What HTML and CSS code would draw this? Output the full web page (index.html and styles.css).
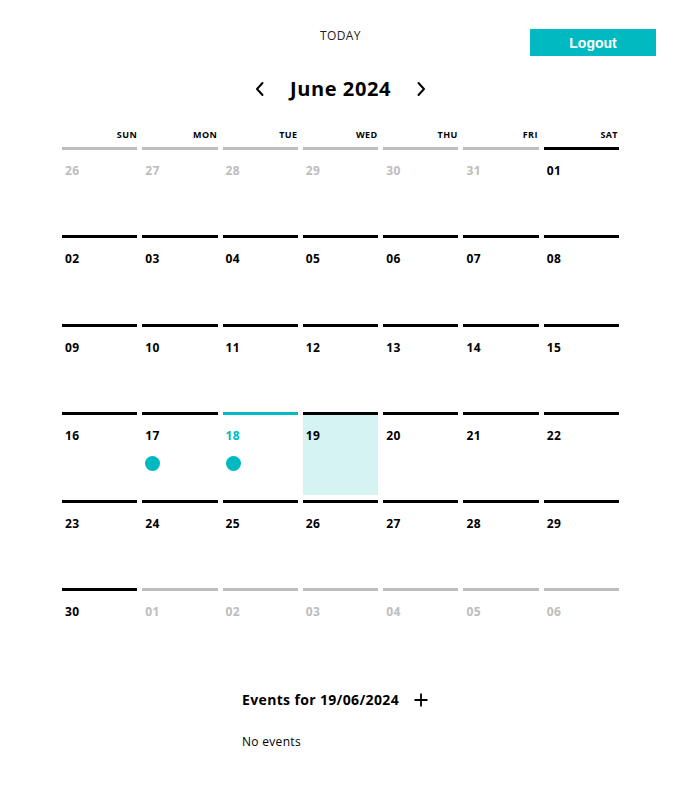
FILE: index.html
```html
<!DOCTYPE html>
<html lang="en">
<head>
<meta charset="utf-8">
<title>Calendar</title>
<link rel="stylesheet" href="styles.css">
</head>
<body>
<header class="topbar">
  <span class="spacer"></span>
  <button class="today">TODAY</button>
  <button class="logout">Logout</button>
</header>

<div class="month-nav">
  <button class="chev" aria-label="Previous month">
    <svg width="12" height="16" viewBox="0 0 12 16"><path d="M8.5 2 L3 8 L8.5 14" fill="none" stroke="#000" stroke-width="2" stroke-linecap="round" stroke-linejoin="round"/></svg>
  </button>
  <h1 class="month-title">June 2024</h1>
  <button class="chev" aria-label="Next month">
    <svg width="12" height="16" viewBox="0 0 12 16"><path d="M3.5 2 L9 8 L3.5 14" fill="none" stroke="#000" stroke-width="2" stroke-linecap="round" stroke-linejoin="round"/></svg>
  </button>
</div>

<section class="calendar">
  <div class="weekdays">
    <div>SUN</div><div>MON</div><div>TUE</div><div>WED</div><div>THU</div><div>FRI</div><div>SAT</div>
  </div>
  <div class="days">
    <div class="cell other"><span class="num">26</span></div>
    <div class="cell other"><span class="num">27</span></div>
    <div class="cell other"><span class="num">28</span></div>
    <div class="cell other"><span class="num">29</span></div>
    <div class="cell other"><span class="num">30</span></div>
    <div class="cell other"><span class="num">31</span></div>
    <div class="cell"><span class="num">01</span></div>

    <div class="cell"><span class="num">02</span></div>
    <div class="cell"><span class="num">03</span></div>
    <div class="cell"><span class="num">04</span></div>
    <div class="cell"><span class="num">05</span></div>
    <div class="cell"><span class="num">06</span></div>
    <div class="cell"><span class="num">07</span></div>
    <div class="cell"><span class="num">08</span></div>

    <div class="cell"><span class="num">09</span></div>
    <div class="cell"><span class="num">10</span></div>
    <div class="cell"><span class="num">11</span></div>
    <div class="cell"><span class="num">12</span></div>
    <div class="cell"><span class="num">13</span></div>
    <div class="cell"><span class="num">14</span></div>
    <div class="cell"><span class="num">15</span></div>

    <div class="cell"><span class="num">16</span></div>
    <div class="cell"><span class="num">17</span><span class="dot"></span></div>
    <div class="cell today-cell"><span class="num">18</span><span class="dot"></span></div>
    <div class="cell selected"><span class="num">19</span></div>
    <div class="cell"><span class="num">20</span></div>
    <div class="cell"><span class="num">21</span></div>
    <div class="cell"><span class="num">22</span></div>

    <div class="cell"><span class="num">23</span></div>
    <div class="cell"><span class="num">24</span></div>
    <div class="cell"><span class="num">25</span></div>
    <div class="cell"><span class="num">26</span></div>
    <div class="cell"><span class="num">27</span></div>
    <div class="cell"><span class="num">28</span></div>
    <div class="cell"><span class="num">29</span></div>

    <div class="cell"><span class="num">30</span></div>
    <div class="cell other"><span class="num">01</span></div>
    <div class="cell other"><span class="num">02</span></div>
    <div class="cell other"><span class="num">03</span></div>
    <div class="cell other"><span class="num">04</span></div>
    <div class="cell other"><span class="num">05</span></div>
    <div class="cell other"><span class="num">06</span></div>
  </div>
</section>

<section class="events">
  <div class="events-head">
    <h2 class="events-title">Events for 19/06/2024</h2>
    <button class="add" aria-label="Add event">
      <svg width="14" height="14" viewBox="0 0 14 14"><path d="M7 0.5 V13.5 M0.5 7 H13.5" stroke="#000" stroke-width="1.8"/></svg>
    </button>
  </div>
  <p class="no-events">No events</p>
</section>
</body>
</html>
```

FILE: styles.css
```css
* { box-sizing: border-box; }

body {
  margin: 0;
  background: #fff;
  color: #000;
  font-family: "Open Sans", "DejaVu Sans", sans-serif;
}

button {
  font-family: inherit;
  background: none;
  border: 0;
  padding: 0;
  cursor: pointer;
}

.topbar {
  display: grid;
  grid-template-columns: 1fr auto 1fr;
  align-items: start;
  padding: 29px 25px 0;
}

.today {
  font-size: 12px;
  line-height: 14px;
  color: #222;
  letter-spacing: 0.4px;
}

.logout {
  justify-self: end;
  width: 126px;
  height: 27px;
  background: #00b9c1;
  color: #fff;
  font-family: "Liberation Sans", Arial, sans-serif;
  font-weight: bold;
  font-size: 14px;
}

.month-nav {
  display: flex;
  justify-content: center;
  align-items: center;
  gap: 24px;
  margin-top: 20px;
  height: 26px;
}

.chev {
  display: flex;
  width: 12px;
  height: 16px;
}

.month-title {
  margin: 0;
  font-size: 20px;
  line-height: 26px;
  font-weight: 700;
  letter-spacing: 0.6px;
}

.calendar {
  width: 557px;
  margin: 27px auto 0;
}

.weekdays {
  display: grid;
  grid-template-columns: repeat(7, 1fr);
  column-gap: 5px;
  font-size: 9px;
  line-height: 11px;
  font-weight: 700;
  letter-spacing: 0.4px;
  text-align: right;
  padding-right: 1px;
}

.days {
  display: grid;
  grid-template-columns: repeat(7, 1fr);
  grid-auto-rows: 83.3px;
  column-gap: 5px;
  row-gap: 5px;
  margin-top: 7px;
}

.cell {
  border-top: 3px solid #000;
  padding: 14px 3px 0;
  display: flex;
  flex-direction: column;
  align-items: flex-start;
}

.num {
  font-size: 12px;
  line-height: 14px;
  font-weight: 700;
  letter-spacing: 0.4px;
}

.cell.other {
  border-top-color: #bdbdbd;
}

.cell.other .num {
  color: #bdbdbd;
}

.cell.today-cell {
  border-top-color: #00b9c1;
}

.cell.today-cell .num {
  color: #00b9c1;
}

.cell.selected {
  background: #d6f3f3;
}

.dot {
  width: 15px;
  height: 15px;
  border-radius: 50%;
  background: #00b9c1;
  margin-top: 13px;
}

.events {
  width: 197px;
  margin: 19px auto 0;
}

.events-head {
  display: flex;
  align-items: center;
  gap: 15px;
}

.events-title {
  margin: 0;
  font-size: 14px;
  line-height: 18px;
  font-weight: 700;
  letter-spacing: 0.35px;
  white-space: nowrap;
}

.add {
  display: flex;
}

.no-events {
  margin: 26px 0 0;
  font-size: 12px;
  line-height: 14px;
  letter-spacing: 0.3px;
}
```
